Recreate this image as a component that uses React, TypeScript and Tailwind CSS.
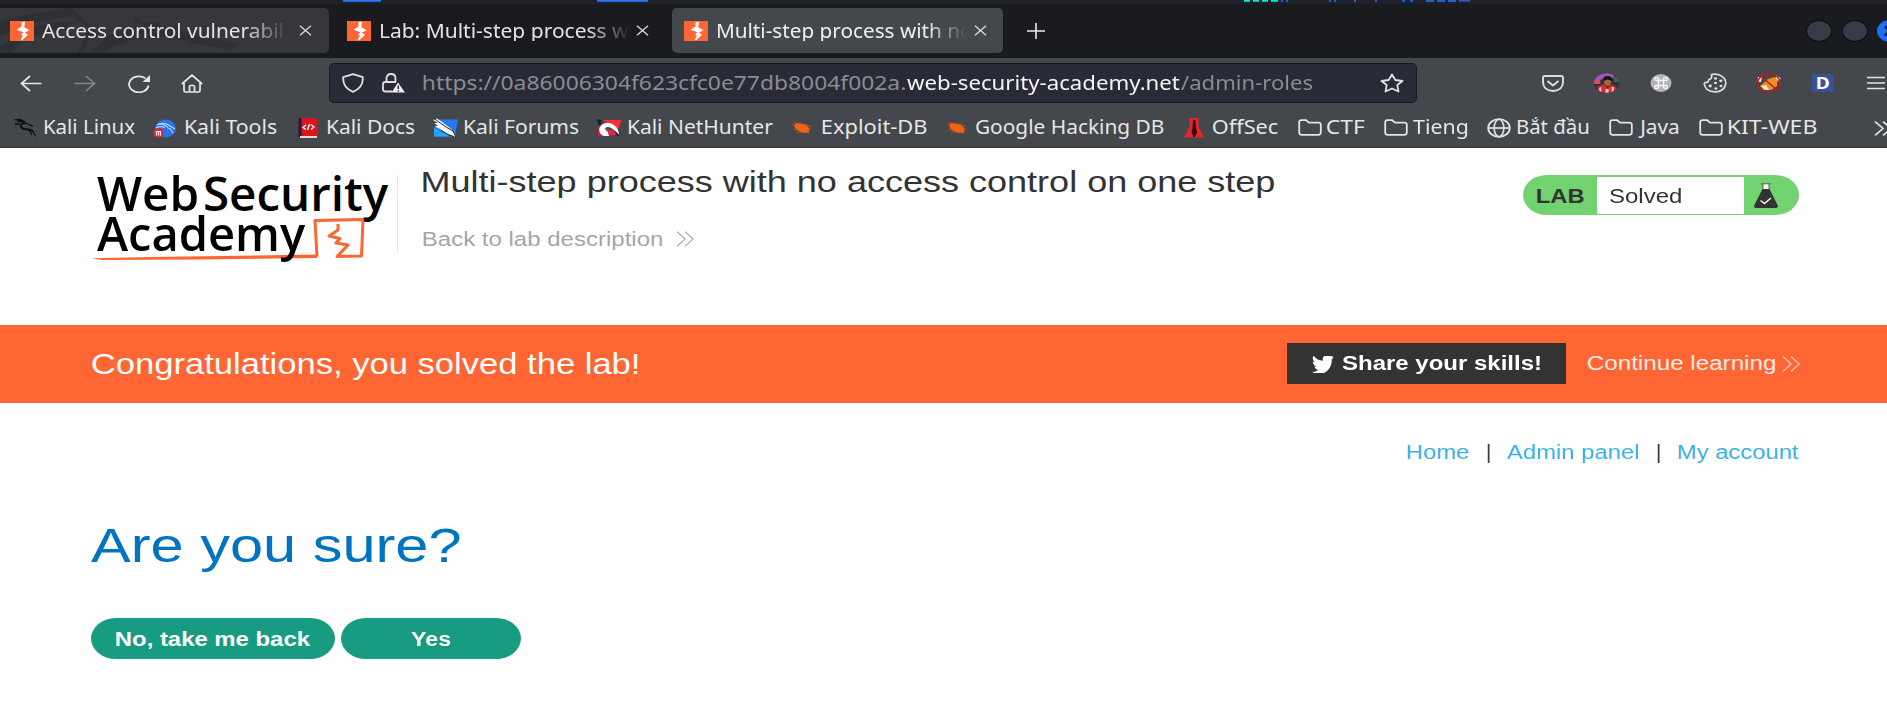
import { useLayoutEffect, useRef } from "react";
import type { ReactNode } from "react";

/** Stretches a line of text horizontally so that its ink fills the box width. */
function Fit({ children, className }: { children: string; className: string }) {
  const box = useRef<HTMLSpanElement>(null);
  const inner = useRef<HTMLSpanElement>(null);
  useLayoutEffect(() => {
    const b = box.current;
    const t = inner.current;
    const ctx = document.createElement("canvas").getContext("2d");
    if (!b || !t || !ctx) return;
    const cs = getComputedStyle(t);
    ctx.font = `${cs.fontWeight} ${cs.fontSize} ${cs.fontFamily}`;
    const m = ctx.measureText(children);
    const left = -m.actualBoundingBoxLeft;
    const ink = m.actualBoundingBoxRight - left;
    const s = b.getBoundingClientRect().width / ink;
    t.style.transform = `translateX(${-left * s}px) scaleX(${s})`;
  }, [children]);
  return (
    <span ref={box} className={`block shrink-0 whitespace-nowrap text-left leading-none ${className}`}>
      <span ref={inner} className="inline-block origin-left align-top">
        {children}
      </span>
    </span>
  );
}

function Svg({ box = "0 0 24 20", className, children }: { box?: string; className: string; children: ReactNode }) {
  return (
    <svg viewBox={box} preserveAspectRatio="none" fill="none" className={`shrink-0 ${className}`}>
      {children}
    </svg>
  );
}

const Favicon = ({ className = "" }: { className?: string }) => (
  <Svg className={`h-[20px] w-[24px] ${className}`}>
    <rect width="24" height="20" fill="#ff6633" />
    <path d="M11.500 1 15 .8 14.300 6.300 19.500 9.200 14.800 11.800 18 13.800 12 19.500 10.600 19 12.800 14.500 11 13.500 13.500 11.300 6.500 8.800 11.500 5.500Z" fill="#fff" />
  </Svg>
);

const Close = ({ className = "" }: { className?: string }) => (
  <Svg box="0 0 13 11" className={`h-[11px] w-[13px] ${className}`}>
    <path d="M1 .8 12 10.2M12 .8 1 10.2" stroke="#d8d8dc" strokeWidth="1.4" />
  </Svg>
);

const Folder = () => (
  <Svg box="0 0 24 17" className="h-[17px] w-[24px]">
    <path d="M1.2 3.2Q1.2 1.2 3.4 1.2H8.2L11 3.6H20.4Q22.8 3.6 22.8 5.6V13.6Q22.8 15.8 20.4 15.8H3.6Q1.2 15.8 1.2 13.6Z" stroke="#e4e4e4" strokeWidth="1.8" />
  </Svg>
);

const Spider = () => (
  <Svg box="0 0 24 16" className="h-[16px] w-[24px]">
    <path d="M1 3.500 6 5 3 1 9 3.500 13 4 17 3.500 17 5 22 6 18 7.500 22 9.500 18 10 20 14 15 12 14 13.500 11 12 6 13.500 9 11 3 9.500 6 8Z" fill="#a8511f" />
    <ellipse cx="12" cy="8" rx="8" ry="4" transform="rotate(22 12 8)" fill="#ee6410" />
  </Svg>
);

const Chevrons = ({ className, stroke, w = 1.1 }: { className: string; stroke: string; w?: number }) => (
  <Svg box="0 0 18 16" className={className}>
    <path d="M1 .6 9 8 1 15.400M9 .6 17.200 8 9 15.400" stroke={stroke} strokeWidth={w} />
  </Svg>
);

const bookmarks: { gap: string; icon: ReactNode; text: string; w: string }[] = [
  {
    gap: "ml-[13px]",
    icon: (
      <Svg className="h-[20px] w-[24px]">
        <path d="M0 1.500 7 .8 13 3.500 11 4 15 6.500Q10 5 8.500 8 10 10.500 15 10.500 21 11 21.500 15.500L24 19.500Q21 17.500 19.500 14 17 12 12.500 12.200 7 11.500 6.500 8 7.500 5 10 4.500L5 4 1 4.500 6 3Z" fill="#0c0c0e" />
        <path d="M13 5 20 8.500M2 6.500 7 5.500M16 12 19 17" stroke="#0c0c0e" strokeWidth="1.300" />
      </Svg>
    ),
    text: "Kali Linux",
    w: "ml-[7px] w-[91px]",
  },
  {
    gap: "ml-[18px]",
    icon: (
      <Svg className="h-[20px] w-[24px]">
        <ellipse cx="12.500" cy="10.500" rx="10.500" ry="9" fill="#2a74ee" />
        <path d="M4 7Q11 3.500 17 8L22 11M6 6Q13 6.500 15 10 18 10.500 20 15M3 10Q7 7.500 12 9.500" stroke="#b9d4ff" strokeWidth="1.200" />
        <ellipse cx="5.500" cy="15" rx="5.500" ry="4.800" fill="#e3242b" />
        <path d="M3.500 17.500V13.500H5.500V17.500M5.500 13.500H7.500V17.500" stroke="#fff" strokeWidth="1.200" />
      </Svg>
    ),
    text: "Kali Tools",
    w: "ml-[8px] w-[92px]",
  },
  {
    gap: "ml-[21px]",
    icon: (
      <Svg box="0 0 20 20" className="h-[20px] w-[20px]">
        <rect width="19" height="19" x=".5" fill="#d8151c" />
        <rect width="3" height="19" x=".5" fill="#191e45" />
        <path d="M2 19H19" stroke="#eee" strokeWidth="1.800" />
        <path d="M8 7 5 9.500 8 11.500M13 6.500 16 9 13 11.500M11.500 6 9.500 12" stroke="#fff" strokeWidth="1.300" />
      </Svg>
    ),
    text: "Kali Docs",
    w: "ml-[9px] w-[88px]",
  },
  {
    gap: "ml-[18px]",
    icon: (
      <Svg box="0 0 25 20" className="h-[20px] w-[25px]">
        <path d="M6 1.500H25L22 18.500H1V10Z" fill="#2779f2" />
        <path d="M1 10V18.500H17Z" fill="#22a4ff" />
        <path d="M0 2 4 .5Q8 3 11 5.500L17 10Q21 13 23 19 19 18 16.500 16.500L13 15.500 7 11 2 8.500 5 7.500 1 5 5 5Z" fill="#f6f6f6" />
        <path d="M1 .5 13 9 20 13 23 19.500M8 12.500 16 17 21 18.500" stroke="#15171e" strokeWidth=".9" />
      </Svg>
    ),
    text: "Kali Forums",
    w: "ml-[6px] w-[115px]",
  },
  {
    gap: "ml-[18px]",
    icon: (
      <Svg box="0 0 25 18" className="h-[18px] w-[25px]">
        <path d="M0 0 5 1 3 7 1 5Z" fill="#1d1d24" />
        <path d="M15 17 20 12 23.500 14 22 17Z" fill="#24242b" />
        <path d="M5 1H24.500L21 11 15 7Z" fill="#ff2b33" />
        <path d="M1 6 6 17 1 17Z" fill="#d31948" />
        <path d="M2 11Q3 4 11 3.800 18 4.500 21 11L22.500 16Q19 12 15 9.500 9 6.500 8 10L11 13 12 17H7Q3 16 2 11Z" fill="#fff" />
        <path d="M9 10 16 11 20 16.500H13Z" fill="#e8263a" />
      </Svg>
    ),
    text: "Kali NetHunter",
    w: "ml-[6px] w-[145px]",
  },
  { gap: "ml-[17px]", icon: <Spider />, text: "Exploit-DB", w: "ml-[8px] w-[105px]" },
  { gap: "ml-[18px]", icon: <Spider />, text: "Google Hacking DB", w: "ml-[7px] w-[188px]" },
  {
    gap: "ml-[20px]",
    icon: (
      <Svg box="0 0 20 20" className="h-[20px] w-[20px]">
        <path d="M5.500 0H14.500V9L20 19.500H0L5.500 9Z" fill="#e8222a" />
        <path d="M9 2H11.300L12 11 13 14 11 19H9.500L7.500 14 8.500 11Z" fill="#25060a" />
      </Svg>
    ),
    text: "OffSec",
    w: "ml-[9px] w-[65px]",
  },
  { gap: "ml-[20px]", icon: <Folder />, text: "CTF", w: "ml-[5px] w-[38px]" },
  { gap: "ml-[19px]", icon: <Folder />, text: "Tieng", w: "ml-[5px] w-[55px]" },
  {
    gap: "ml-[19px]",
    icon: (
      <Svg className="mt-[1px] h-[20px] w-[24px]">
        <ellipse cx="12" cy="10" rx="10.800" ry="8.800" stroke="#e4e4e4" strokeWidth="1.800" />
        <ellipse cx="12" cy="10" rx="4.800" ry="8.800" stroke="#e4e4e4" strokeWidth="1.600" />
        <path d="M1 10H23" stroke="#e4e4e4" strokeWidth="1.700" />
      </Svg>
    ),
    text: "Bắt đầu",
    w: "ml-[6px] w-[72px]",
  },
  { gap: "ml-[20px]", icon: <Folder />, text: "Java", w: "ml-[5px] w-[41px]" },
  { gap: "ml-[20px]", icon: <Folder />, text: "KIT-WEB", w: "ml-[5px] w-[89px]" },
];

function TabStrip() {
  return (
    <div className="flex h-[54px] items-start bg-[#1a1b1f] pt-[4px]">
      <div className="relative flex h-[45px] w-[329px] items-center overflow-hidden rounded-r-[5px] bg-[#36373b]">
        <svg viewBox="0 0 329 45" className="absolute inset-0 h-[45px] w-[329px]" fill="#2f3033">
          <path d="M0 14Q30 4 64 2L72 8Q34 12 0 28ZM0 38Q30 14 72 14L66 22Q30 24 10 45H0ZM62 0H72L96 22 82 45H90L108 28Q150 8 190 26L238 36 232 42 196 36Q150 18 100 45H78L88 20Z" />
          <path d="M134 8 144 16 156 14 164 20 176 18 184 24 196 22 206 28 160 22 136 14Z" />
        </svg>
        <div className="relative flex items-center">
          <Favicon className="ml-[10px]" />
          <Fit className="ml-[8px] mt-px w-[241px] text-[19px] text-[#e3e3e5] [mask-image:linear-gradient(to_right,black_84%,transparent_102%)]">Access control vulnerabil</Fit>
          <Close className="ml-[16px]" />
        </div>
      </div>
      <div className="flex h-[45px] w-[343px] items-center">
        <Favicon className="ml-[18px]" />
        <Fit className="ml-[9px] mt-px w-[253px] text-[19px] text-[#e3e3e5] [mask-image:linear-gradient(to_right,black_82%,transparent_99%)]">Lab: Multi-step process wi</Fit>
        <Close className="ml-[3px]" />
      </div>
      <div className="flex h-[45px] w-[331px] items-center rounded-[5px] bg-[#44474c]">
        <Favicon className="ml-[12px]" />
        <Fit className="ml-[9px] mt-px w-[255px] text-[19px] text-[#efeff0] [mask-image:linear-gradient(to_right,black_82%,transparent_98%)]">Multi-step process with no</Fit>
        <Close className="ml-[2px]" />
      </div>
      <Svg box="0 0 18 16" className="ml-[24px] mt-[15px] h-[16px] w-[18px]">
        <path d="M9 0V16M0 8H18" stroke="#ececee" strokeWidth="1.600" />
      </Svg>
      <div className="ml-auto flex h-[45px] items-center">
        <span className="h-[22px] w-[26px] rounded-[50%] border border-[#0b0c0e] bg-[#373b47]" />
        <span className="ml-[10px] h-[22px] w-[26px] rounded-[50%] border border-[#0b0c0e] bg-[#373b47]" />
        <Svg box="0 0 10 22" className="ml-[9px] h-[22px] w-[10px]">
          <ellipse cx="13" cy="11" rx="13" ry="11" fill="#1f6ff5" />
          <path d="M8 6.500 18 15.500M18 6.500 8 15.500" stroke="#11151f" strokeWidth="2.400" />
        </Svg>
      </div>
    </div>
  );
}

function Toolbar() {
  return (
    <div className="flex h-[50px] items-center bg-[#44474c]">
      <Svg box="0 0 22 17" className="ml-[20px] h-[17px] w-[22px]">
        <path d="M21.500 8.500H1.500M10 1 1.500 8.500 10 16" stroke="#e6e6e8" strokeWidth="1.700" />
      </Svg>
      <Svg box="0 0 22 17" className="ml-[32px] h-[17px] w-[22px]">
        <path d="M.5 8.500H20.500M12 1 20.500 8.500 12 16" stroke="#838589" strokeWidth="1.600" />
      </Svg>
      <Svg box="0 0 22 18" className="ml-[32px] mt-px h-[18px] w-[22px]">
        <path d="M20.600 10.500A9.800 8 0 1 1 17.500 3.400" stroke="#e6e6e8" strokeWidth="1.800" />
        <path d="M22 0V7H14.500Z" fill="#e6e6e8" />
      </Svg>
      <Svg box="0 0 22 19" className="ml-[31px] h-[19px] w-[22px]">
        <path d="M.8 10 11 1.200 21.200 10M3 8.500V16.500Q3 18 4.500 18H17.500Q19 18 19 16.500V8.500M8.500 18V12.500Q8.500 11.500 9.500 11.500H12.500Q13.500 11.500 13.500 12.500V18" stroke="#e6e6e8" strokeWidth="1.700" />
      </Svg>
      <div className="ml-[126px] flex h-[40px] w-[1088px] items-center rounded-[5px] border border-[#17181d] bg-[#282a36]">
        <Svg box="0 0 22 20" className="ml-[12px] h-[20px] w-[22px]">
          <path d="M11 1.200 20.800 4.200Q21.500 14.500 11 18.800 .5 14.500 1.200 4.200Z" stroke="#e0e0e4" strokeWidth="1.800" strokeLinejoin="round" />
        </Svg>
        <Svg box="0 0 23 20" className="ml-[18px] h-[20px] w-[23px]">
          <path d="M4.500 9V5.500Q4.500 1 9 1 13.500 1 13.500 5.500V9M10 18.500H3.500Q1 18.500 1 16.500V11Q1 9 3.500 9H14" stroke="#e0e0e4" strokeWidth="1.800" />
          <path d="M16 9.500 23 19.500H9.500Z" fill="#ededf0" />
          <path d="M16.300 12.500V16M16.300 17.200V18.500" stroke="#282a36" strokeWidth="1.500" />
        </Svg>
        <Fit className="ml-[18px] w-[482px] text-[19px] text-[#8b8c92]">https://0a86006304f623cfc0e77db8004f002a.</Fit>
        <Fit className="ml-[2px] w-[273px] text-[19px] text-[#f4f4f5]">web-security-academy.net</Fit>
        <Fit className="ml-[1px] w-[132px] text-[19px] text-[#8b8c92]">/admin-roles</Fit>
        <Svg className="ml-[67px] h-[20px] w-[24px]">
          <path d="M12 1.500 15.300 7 22.500 8 17.300 12 18.500 18.500 12 15.500 5.500 18.500 6.700 12 1.500 8 8.700 7Z" stroke="#e0e0e4" strokeWidth="1.800" strokeLinejoin="round" />
        </Svg>
      </div>
      <Svg box="0 0 22 17" className="ml-[125px] h-[17px] w-[22px]">
        <path d="M3 1H19Q21 1 21 3V7.500Q20.500 15.500 11 16 1.500 15.500 1 7.500V3Q1 1 3 1ZM5.500 6 11 10.500 16.500 6" stroke="#dedee0" strokeWidth="1.900" strokeLinejoin="round" />
      </Svg>
      <Svg className="ml-[30px] h-[20px] w-[25px]">
        <clipPath id="avatar"><ellipse cx="12" cy="10" rx="12" ry="9.800" /></clipPath>
        <g clipPath="url(#avatar)">
          <rect width="24" height="20" fill="#34323c" />
          <path d="M0 3 5 0H18L20 5 14 4 6 7 0 7Z" fill="#a056b4" />
          <path d="M0 7H6V11H0Z" fill="#d84b67" />
          <path d="M19 4H24V9H19Z" fill="#2d6a5e" />
          <ellipse cx="13" cy="9" rx="3.500" ry="4" fill="#a4623f" />
          <path d="M8.500 8Q8.500 3 13 3T17.500 8L13 6.500Z" fill="#1a1113" />
          <path d="M2 20 4 13.500 9 11.500 13 15 17 11.500 21 14 23 20Z" fill="#dc2c32" />
          <path d="M5 15 7 14V20H5ZM11 16H14V20H11ZM17 14H19V20H17Z" fill="#f2c9c4" />
        </g>
      </Svg>
      <Svg box="0 0 22 18" className="ml-[31px] h-[18px] w-[22px]">
        <ellipse cx="11" cy="9" rx="10.500" ry="9" fill="#b4b4b4" />
        <path d="M8.500 6.500H13.500V11.500H8.500ZM8.500 6.500H6.500Q4.500 6.500 4.500 5T6.500 3.500 8.500 5.500ZM13.500 6.500V5.500Q13.500 3.500 15.500 3.500T17.500 5 15.500 6.500ZM8.500 11.500V12.500Q8.500 14.500 6.500 14.500T4.500 13 6.500 11.500ZM13.500 11.500H15.500Q17.500 11.500 17.500 13T15.500 14.500 13.500 12.500Z" stroke="#f6f6f6" strokeWidth="1.300" />
      </Svg>
      <Svg className="ml-[31px] h-[20px] w-[24px]">
        <path d="M8.500 1.500Q12 .5 16 1.700 23 4.500 22.800 10.500 21.500 18.700 12 18.900 2 18.500 1.200 10.500L2 9.500Q6 9.500 5.800 6.500 9.500 6 8.500 1.500Z" stroke="#dedee0" strokeWidth="1.700" strokeLinejoin="round" />
        <g fill="#dedee0">
          <ellipse cx="12.500" cy="5.500" rx="1.600" ry="1.300" />
          <ellipse cx="17.800" cy="7.800" rx="1.700" ry="1.400" />
          <ellipse cx="12.500" cy="10" rx="1.500" ry="1.300" />
          <ellipse cx="7.200" cy="13" rx="1.700" ry="1.400" />
          <ellipse cx="12.800" cy="15.500" rx="1.500" ry="1.200" />
          <ellipse cx="18" cy="13" rx="1.600" ry="1.300" />
        </g>
      </Svg>
      <Svg className="ml-[30px] h-[20px] w-[24px]">
        <path d="M11 6 18 4 22 6 20 10 20 13 14 17H7L3 13 8 9Z" fill="#ef8f1c" />
        <path d="M19 2 23.500 5 23 8 19 6ZM.8 4 5 4 4 9 1 9ZM4 13 9 12 12 17H8Z" fill="#f6ead6" />
        <ellipse cx="12" cy="10" rx="11.200" ry="9.200" stroke="#c3161c" strokeWidth="1.500" />
        <path d="M4.500 3.500 19.500 16.500" stroke="#c3161c" strokeWidth="1.600" />
      </Svg>
      <div className="ml-[31px] flex h-[18px] w-[22px] items-center justify-center rounded-[2px] bg-[#36539a]">
        <Fit className="w-[12px] text-[16px] font-bold text-white">D</Fit>
      </div>
      <Svg box="0 0 18 14" className="ml-[33px] h-[14px] w-[18px]">
        <path d="M0 1.500H18M0 7H18M0 12.500H18" stroke="#e2e2e4" strokeWidth="1.700" />
      </Svg>
    </div>
  );
}

function Chrome() {
  return (
    <header className="[font-family:'Noto_Sans',sans-serif]">
      <svg viewBox="0 0 1887 4" className="block h-[4px] w-full" preserveAspectRatio="none">
        <rect width="1887" height="4" fill="#1e202b" />
        <path d="M343 0H381V1.700H343ZM597 0H648V1.700H597Z" fill="#2777ff" />
        <path d="M1244 0H1250V1.800H1244ZM1253 0H1259V1.800H1253ZM1262 0H1268V1.800H1262ZM1271 0H1278V1.800H1271Z" fill="#00f0d0" />
        <path d="M1281 0H1283V2H1281ZM1286 0H1288V2H1286ZM1329 0H1331V2H1329ZM1334 0H1336V2H1334ZM1354 0H1356V2H1354ZM1375 0H1377V2H1375ZM1402 0H1405V2H1402ZM1410 0H1413V2H1410ZM1426 0H1434V2H1426ZM1437 0H1445V2H1437ZM1448 0H1456V2H1448ZM1459 0H1470V1.500H1459Z" fill="#2560c8" />
      </svg>
      <TabStrip />
      <Toolbar />
      <nav className="flex h-[40px] items-center overflow-hidden border-b border-[#2a2c30] bg-[#44474c] text-[19px] text-[#e6e6e6]">
        {bookmarks.map((b) => (
          <div key={b.text} className={`flex shrink-0 items-center ${b.gap}`}>
            {b.icon}
            <Fit className={b.w}>{b.text}</Fit>
          </div>
        ))}
        <Chevrons className="ml-[57px] mt-px h-[15px] w-[18px]" stroke="#e2e2e4" w={1.7} />
      </nav>
    </header>
  );
}

function Logo() {
  return (
    <div className="relative mt-[26px] flex h-[86px] w-[305px] flex-col text-[47px] font-semibold text-black [font-family:'Open_Sans',sans-serif]">
      <svg viewBox="0 0 305 86" className="absolute left-0 top-0 h-[86px] w-[305px]" fill="none" stroke="#ff6633">
        <path d="M225 82.500 223 46.500 271 45.500 269.500 82 245 82.500 256 71 244 69 248 64.500 237 62 246 56 246 50" strokeWidth="3" strokeLinejoin="round" />
        <path d="M0 84.300 60 83 225 80.500V84L110 85.500 10 86Z" fill="#ff6633" stroke="none" />
      </svg>
      <div className="relative -mt-[1px] flex pl-[5px]">
        <Fit className="w-[100px] leading-[40px]!">Web</Fit>
        <Fit className="ml-[8px] w-[184px] leading-[40px]!">Security</Fit>
      </div>
      <div className="relative pl-[5px]">
        <Fit className="w-[209px] leading-[40px]!">Academy</Fit>
      </div>
    </div>
  );
}

function LabHeader() {
  return (
    <section className="flex h-[177px] items-start pl-[92px] pr-[88px]">
      <Logo />
      <div className="mt-[27px] h-[78px] w-px bg-[#e3e3e3]" />
      <div className="ml-[25px] flex flex-col">
        <Fit className="mt-[20px] w-[851px] text-[29px] text-[#333332]">Multi-step process with no access control on one step</Fit>
        <div className="mt-[32px] flex items-center">
          <Fit className="w-[239px] text-[20px] text-[#a5a5a8]">Back to lab description</Fit>
          <Chevrons className="ml-[14px] h-[16px] w-[18px]" stroke="#a5a5a8" />
        </div>
      </div>
      <div className="ml-auto mt-[27px] flex h-[40px] w-[276px] items-center overflow-hidden rounded-[24px/20px] bg-[#72d26f] text-[20px] text-[#333332]">
        <Fit className="ml-[14px] mt-px w-[47px] font-bold">LAB</Fit>
        <div className="ml-[13px] flex h-[37px] w-[147px] items-center bg-white pl-[12px]">
          <Fit className="mt-px w-[72px]">Solved</Fit>
        </div>
        <Svg box="0 0 24 25" className="ml-[10px] h-[25px] w-[24px]">
          <path d="M9 1H15V6H9Z" fill="#fff" />
          <path d="M7 .8H17M9 1V6M15 1V6" stroke="#4b6b48" strokeWidth="1" />
          <path d="M8.500 6H15.500L23.800 22.500Q24.200 25 22 25H2Q-.2 25 .2 22.500Z" fill="#333332" />
          <path d="M6.500 17.500 10.500 20.500 17 15" stroke="#f4f4f4" strokeWidth="1.500" />
        </Svg>
      </div>
    </section>
  );
}

function SolvedBanner() {
  return (
    <section className="flex h-[78px] items-center bg-[#ff6633] pl-[92px] pr-[87px] text-white">
      <Fit className="w-[546px] text-[29px]">Congratulations, you solved the lab!</Fit>
      <div className="-mt-[2px] ml-auto flex h-[41px] w-[279px] items-center bg-[#333332]">
        <Svg box="0 3.500 24 17.200" className="ml-[25px] mt-[2px] h-[17px] w-[22px]">
          <path d="M24 4.560a9.800 9.800 0 0 1-2.830.78 4.900 4.900 0 0 0 2.170-2.730 9.900 9.900 0 0 1-3.130 1.200 4.920 4.920 0 0 0-8.380 4.480A13.970 13.970 0 0 1 1.670 3.150a4.920 4.920 0 0 0 1.520 6.570 4.900 4.900 0 0 1-2.230-.62v.06a4.920 4.920 0 0 0 3.950 4.830 5 5 0 0 1-2.220.08 4.930 4.930 0 0 0 4.600 3.420A9.870 9.870 0 0 1 0 19.540a13.940 13.940 0 0 0 7.550 2.210c9.050 0 14-7.500 14-14v-.63A10 10 0 0 0 24 4.560z" fill="#fff" />
        </Svg>
        <Fit className="ml-[8px] w-[198px] text-[20px] font-bold">Share your skills!</Fit>
      </div>
      <Fit className="-mt-[2px] ml-[22px] w-[187px] text-[20px] text-[#ffece5]">Continue learning</Fit>
      <Chevrons className="-mt-px ml-[7px] h-[16px] w-[18px]" stroke="#ffd9cb" />
    </section>
  );
}

export default function App() {
  return (
    <div className="h-[723px] w-[1887px] overflow-hidden bg-white [font-family:'Liberation_Sans',Arial,sans-serif]">
      <Chrome />
      <LabHeader />
      <SolvedBanner />
      <main className="flex flex-col pl-[91px] pr-[88px]">
        <nav className="mt-[39px] flex justify-end text-[20px] text-[#3bb3e8]">
          <Fit className="w-[62px]">Home</Fit>
          <Fit className="ml-[18px] w-[3px] text-[#333332]">|</Fit>
          <Fit className="ml-[17px] w-[132px]">Admin panel</Fit>
          <Fit className="ml-[18px] w-[3px] text-[#333332]">|</Fit>
          <Fit className="ml-[18px] w-[121px]">My account</Fit>
        </nav>
        <h1 className="mt-[59px] text-[49px] text-[#0074c1]">
          <Fit className="w-[369px]">Are you sure?</Fit>
        </h1>
        <div className="mt-[48px] flex gap-[6px] text-[20px] font-bold text-white">
          <button className="flex h-[41px] w-[244px] items-center justify-center rounded-[25px/20.5px] bg-[#189c81]">
            <Fit className="w-[195px]">No, take me back</Fit>
          </button>
          <button className="flex h-[41px] w-[180px] items-center justify-center rounded-[25px/20.5px] bg-[#189c81]">
            <Fit className="w-[40px]">Yes</Fit>
          </button>
        </div>
      </main>
    </div>
  );
}
